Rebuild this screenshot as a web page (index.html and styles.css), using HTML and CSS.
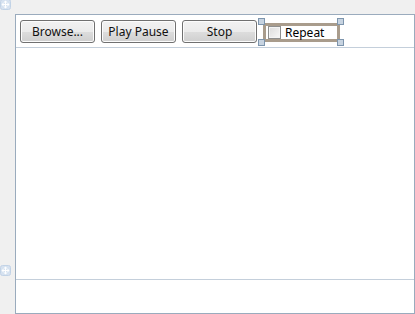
FILE: index.html
```html
<!DOCTYPE HTML>
<html>
	<head>
		<title>Media Player</title>
		<meta charset="utf-8" />
		<link rel="stylesheet" href="styles.css">
	</head>
	<body>
		<div class="gutter">
			<svg class="move-icon top" width="11" height="11" viewBox="0 0 11 11">
				<rect x="0.5" y="0.5" width="10" height="10" rx="2" fill="#d6e2f0" stroke="#c2d3e6"/>
				<path d="M5.5 1.5 L3.5 3.5 H7.5 Z M5.5 9.5 L3.5 7.5 H7.5 Z M1.5 5.5 L3.5 3.5 V7.5 Z M9.5 5.5 L7.5 3.5 V7.5 Z" fill="#ffffff"/>
				<path d="M2.5 5.5 H8.5 M5.5 2.5 V8.5" stroke="#ffffff" stroke-width="1"/>
			</svg>
			<svg class="move-icon bottom" width="11" height="11" viewBox="0 0 11 11">
				<rect x="0.5" y="0.5" width="10" height="10" rx="2" fill="#d6e2f0" stroke="#c2d3e6"/>
				<path d="M5.5 1.5 L3.5 3.5 H7.5 Z M5.5 9.5 L3.5 7.5 H7.5 Z M1.5 5.5 L3.5 3.5 V7.5 Z M9.5 5.5 L7.5 3.5 V7.5 Z" fill="#ffffff"/>
				<path d="M2.5 5.5 H8.5 M5.5 2.5 V8.5" stroke="#ffffff" stroke-width="1"/>
			</svg>
		</div>

		<div class="window">
			<div class="toolbar">
				<button class="btn">Browse...</button>
				<button class="btn">Play Pause</button>
				<button class="btn">Stop</button>
				<div class="selected">
					<label class="repeat">
						<span class="check"></span>
						<span>Repeat</span>
					</label>
					<span class="handle tl"></span>
					<span class="handle tr"></span>
					<span class="handle bl"></span>
					<span class="handle br"></span>
				</div>
			</div>
			<div class="video"></div>
			<div class="status"></div>
		</div>
	</body>
</html>
```

FILE: styles.css
```css
body {
	margin: 0;
	padding: 0;
	background: #f0f0f0;
	font-family: "Noto Sans", "Open Sans", sans-serif;
	font-size: 12px;
	color: #000;
	width: 415px;
	height: 314px;
	overflow: hidden;
	display: flex;
}

.gutter {
	width: 15px;
	position: relative;
}

.move-icon {
	position: absolute;
	left: 0;
}

.move-icon.top {
	top: -1px;
}

.move-icon.bottom {
	top: 265px;
}

.window {
	margin-top: 14px;
	width: 398px;
	height: 298px;
	background: #fff;
	border: 1px solid #9aabbd;
	display: flex;
	flex-direction: column;
}

.toolbar {
	height: 33px;
	border-bottom: 1px solid #c4cfdb;
	display: flex;
	align-items: flex-start;
	gap: 6px;
	padding: 5px 0 0 4px;
	box-sizing: border-box;
}

.btn {
	width: 75px;
	height: 23px;
	margin: 0;
	padding: 0 0 1px;
	font-family: inherit;
	font-size: 12px;
	color: #111;
	border: 1px solid #707070;
	border-radius: 3px;
	background: linear-gradient(to bottom, #f2f2f2 0%, #ebebeb 50%, #dddddd 51%, #cfcfcf 100%);
	box-shadow: inset 0 0 0 1px #fcfcfc;
}

.selected {
	position: relative;
	margin-top: 3px;
}

.repeat {
	display: flex;
	align-items: center;
	gap: 4px;
	width: 68px;
	height: 13px;
	padding: 0 1px 0 2px;
	border: 3px solid #a99c8c;
	line-height: 13px;
}

.check {
	flex-shrink: 0;
	width: 11px;
	height: 11px;
	border: 1px solid #8e8f8f;
	background: linear-gradient(135deg, #dcdcdc 0%, #f8f8f8 100%);
	box-shadow: inset 0 0 0 1px #f4f4f4;
}

.handle {
	position: absolute;
	width: 5px;
	height: 5px;
	background: #c7d3e0;
	border: 1px solid #7d95ad;
}

.handle.tl { left: -5px; top: -5px; }
.handle.tr { right: -4px; top: -5px; }
.handle.bl { left: -5px; bottom: -4px; }
.handle.br { right: -4px; bottom: -4px; }

.video {
	flex: 1;
	border-bottom: 1px solid #c4cfdb;
}

.status {
	height: 33px;
}
```
